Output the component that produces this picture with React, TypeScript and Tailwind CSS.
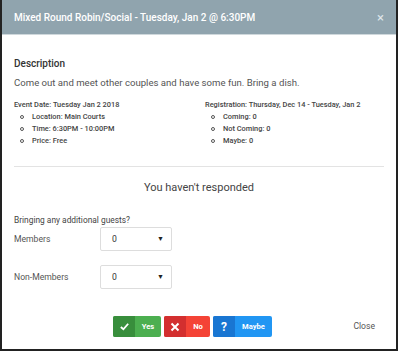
import React from 'react';

const font = { fontFamily: 'Roboto, "Liberation Sans", sans-serif' };

export default function App() {
  return (
    <div className="w-[400px] h-[352px] bg-white" style={font}>
      <div className="w-[398px] h-[351px] border-l-2 border-r-2 border-b-2 border-[#222] flex flex-col">
        {/* Header */}
        <div className="h-[35px] bg-[#90a4ae] border-b border-[#cfd8dc] flex items-center justify-between pl-[12px] pr-[12px]">
          <span className="text-white text-[10px] font-medium">Mixed Round Robin/Social - Tuesday, Jan 2 @ 6:30PM</span>
          <span className="text-[#dfe6ea] text-[13px] leading-none">×</span>
        </div>

        <div className="px-[12px] flex flex-col">
          <h3 className="mt-[22px] text-[10px] font-medium text-[#333] leading-[14px]">Description</h3>
          <p className="mt-[5px] text-[9.6px] text-[#555] leading-[13px]">Come out and meet other couples and have some fun. Bring a dish.</p>

          <div className="mt-[10px] grid grid-cols-2 text-[7.4px] text-[#444] font-medium">
            <div>
              <div className="leading-[12px]">Event Date: Tuesday Jan 2 2018</div>
              <Item>Location: Main Courts</Item>
              <Item>Time: 6:30PM - 10:00PM</Item>
              <Item>Price: Free</Item>
            </div>
            <div className="pl-[6px]">
              <div className="leading-[12px]">Registration: Thursday, Dec 14 - Tuesday, Jan 2</div>
              <Item>Coming: 0</Item>
              <Item>Not Coming: 0</Item>
              <Item>Maybe: 0</Item>
            </div>
          </div>

          <div className="mt-[19px] border-t border-[#e3e3e3]" />

          <div className="mt-[13px] text-center text-[11px] text-[#444] leading-[16px]">You haven't responded</div>

          <div className="mt-[18px] text-[8.4px] text-[#444] leading-[12px]">Bringing any additional guests?</div>

          <Row label="Members" className="mt-[1px]" />
          <Row label="Non-Members" className="mt-[14px]" />

          <div className="mt-[27px] flex items-center">
            <div className="ml-[99px] flex gap-[3px]">
              <Btn dark="bg-[#388e3c]" light="bg-[#4caf50]" w="w-[48px]" label="Yes">
                <svg width="11" height="11" viewBox="0 0 12 12"><path d="M2 6.5 L4.8 9 L10 3" fill="none" stroke="white" strokeWidth="2" /></svg>
              </Btn>
              <Btn dark="bg-[#d32f2f]" light="bg-[#f44336]" w="w-[46px]" label="No">
                <svg width="10" height="10" viewBox="0 0 10 10"><path d="M1.5 1.5 L8.5 8.5 M8.5 1.5 L1.5 8.5" fill="none" stroke="white" strokeWidth="2" /></svg>
              </Btn>
              <Btn dark="bg-[#1976d2]" light="bg-[#2196f3]" w="w-[59px]" label="Maybe">
                <span className="text-white text-[12px] font-bold leading-none">?</span>
              </Btn>
            </div>
            <span className="ml-auto mr-[9px] text-[8.6px] text-[#555]">Close</span>
          </div>
        </div>
      </div>
    </div>
  );
}

function Item({ children }: { children: React.ReactNode }) {
  return (
    <div className="flex items-center leading-[12px] pl-[6px]">
      <span className="w-[4px] h-[4px] rounded-full border border-[#555] mr-[8px]" />
      <span>{children}</span>
    </div>
  );
}

function Row({ label, className }: { label: string; className: string }) {
  return (
    <div className={`flex items-center ${className}`}>
      <span className="w-[86px] text-[8.6px] text-[#555]">{label}</span>
      <div className="w-[72px] h-[24px] border border-[#ddd] rounded-[2px] flex items-center justify-between pl-[11px] pr-[7px] text-[8.6px] text-[#333]">
        <span>0</span>
        <span className="text-[7px] text-[#222]">▼</span>
      </div>
    </div>
  );
}

function Btn({ dark, light, w, label, children }: { dark: string; light: string; w: string; label: string; children: React.ReactNode }) {
  return (
    <div className={`${w} h-[21px] rounded-[2px] overflow-hidden flex ${light}`}>
      <div className={`w-[22px] ${dark} flex items-center justify-center`}>{children}</div>
      <div className="flex-1 flex items-center justify-center text-white text-[7.6px] font-bold">{label}</div>
    </div>
  );
}
